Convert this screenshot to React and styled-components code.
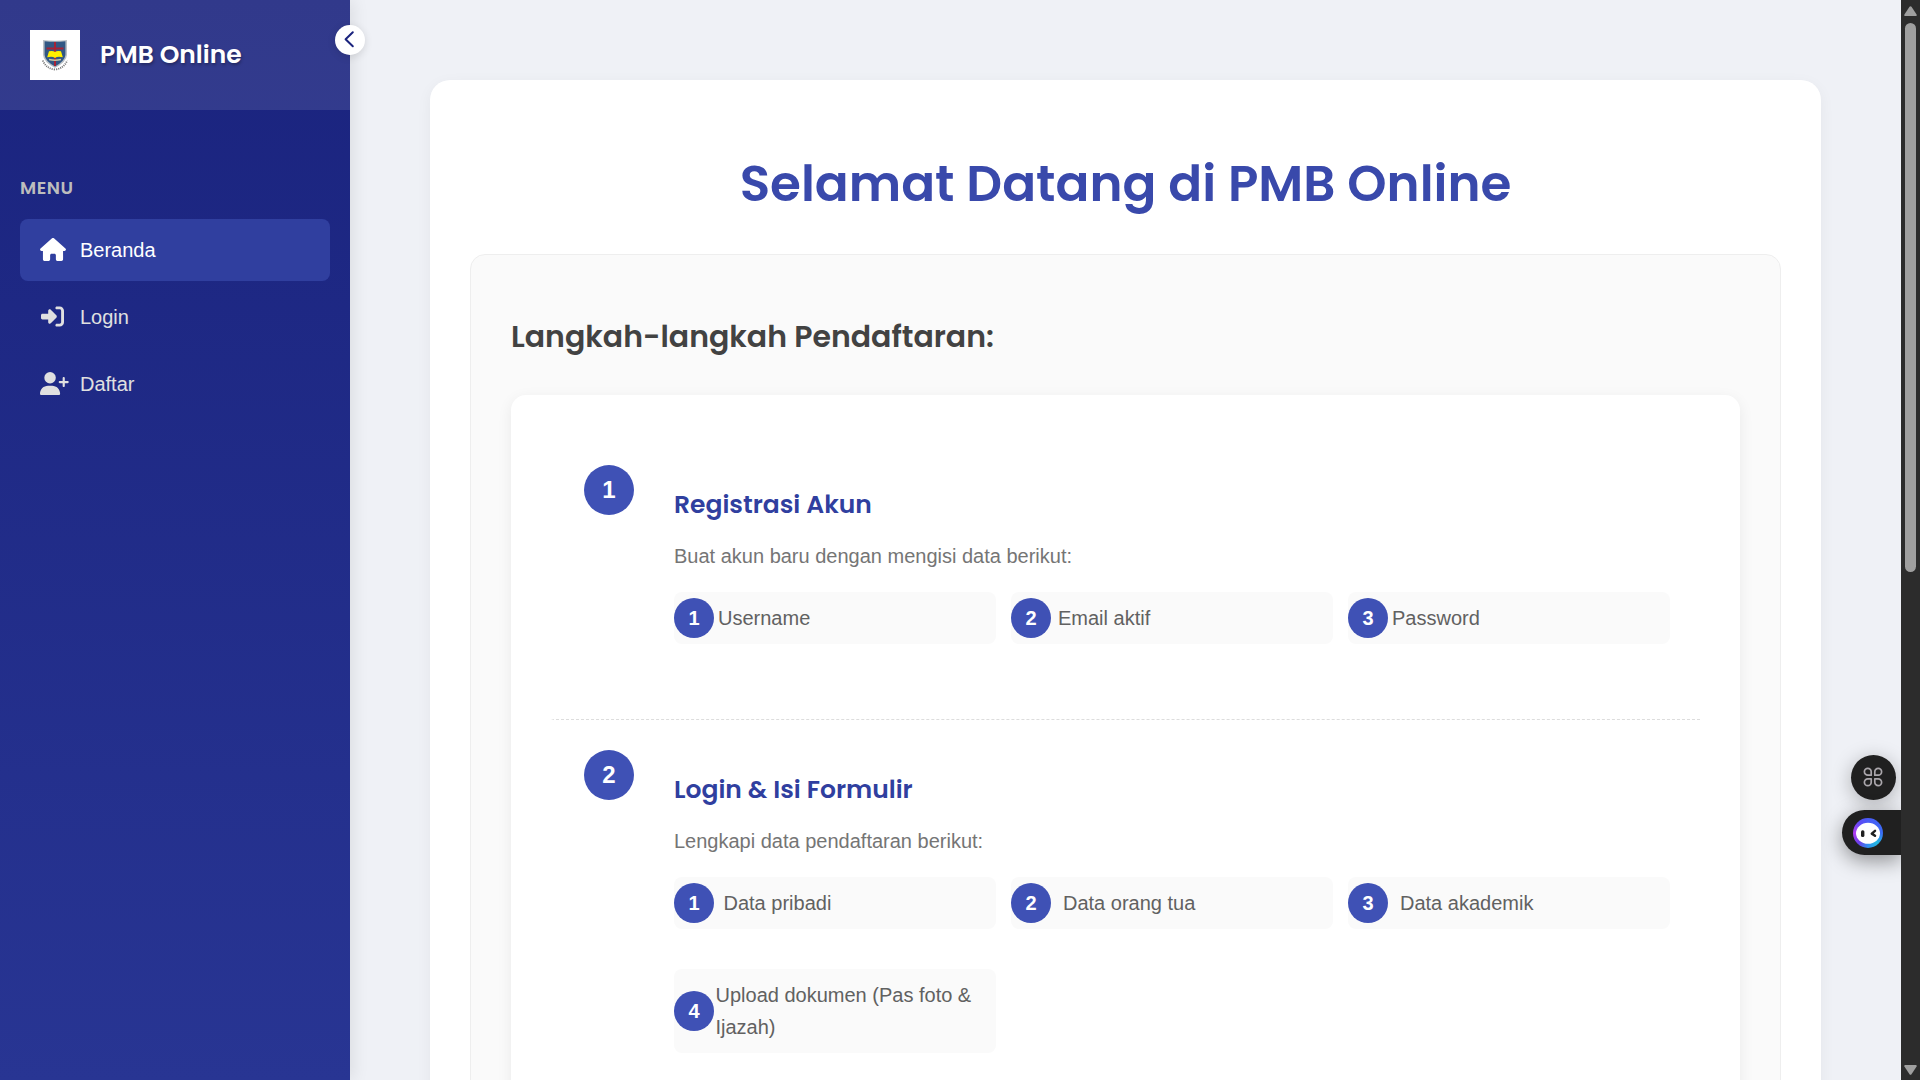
import React from "react";
import styled, { createGlobalStyle } from "styled-components";
import { FaHouse, FaRightToBracket, FaUserPlus } from "react-icons/fa6";

const heading = `"Poppins", "Inter", sans-serif`;

const GlobalStyle = createGlobalStyle`
  *, *::before, *::after { box-sizing: border-box; }
  html, body { margin: 0; height: 1080px; overflow: hidden; }
  body { background: #eff1f6; font-family: "Liberation Sans", Arial, sans-serif; font-size: 20px; line-height: 32px; }
  h1, h2, h3, p, ul, ol { margin: 0; padding: 0; }
  li { list-style: none; }
`;

const Page = styled.div`
  position: relative;
  display: flex;
  width: 1920px;
  height: 1080px;
  overflow: hidden;
`;

const Sidebar = styled.aside`
  position: relative;
  z-index: 2;
  flex: 0 0 350px;
  height: 1080px;
  background: linear-gradient(180deg, #1a237e 0%, #283593 100%);
  box-shadow: 4px 0 15px rgba(0, 0, 0, 0.08);
`;

const Brand = styled.div`
  display: flex;
  align-items: center;
  gap: 20px;
  height: 110px;
  padding: 0 30px;
  background: rgba(255, 255, 255, 0.1);
`;

const Logo = styled.svg`
  display: block;
  width: 50px;
  height: 50px;
  background: #fff;
`;

const BrandName = styled.span`
  font: 600 25px/36px ${heading};
  color: #fff;
  white-space: nowrap;
  text-shadow: 1px 2px 3px rgba(0, 0, 0, 0.3);
`;

const Toggle = styled.button`
  position: absolute;
  top: 25px;
  right: -15px;
  display: flex;
  align-items: center;
  justify-content: center;
  width: 30px;
  height: 30px;
  padding: 0;
  border: 0;
  border-radius: 50%;
  background: #fff;
  box-shadow: 0 2px 8px rgba(0, 0, 0, 0.12);
`;

const Menu = styled.nav`
  padding: 64px 20px 0;
`;

const MenuLabel = styled.div`
  height: 45px;
  font: 600 18px/28px ${heading};
  letter-spacing: 0.5px;
  color: #bdbdbd;
`;

const MenuItem = styled.a`
  display: flex;
  align-items: center;
  height: 62px;
  margin-bottom: 5px;
  padding: 0 20px 1px;
  border-radius: 8px;
  background: ${(p) => (p.$active ? "#303f9f" : "transparent")};
  color: ${(p) => (p.$active ? "#fff" : "#e0e0e0")};
`;

const MenuIcon = styled.span`
  display: flex;
  justify-content: ${(p) => (p.$centered ? "center" : "flex-start")};
  width: 25px;
  margin-right: 15px;
  font-size: 23px;

  svg {
    flex: none;
    width: ${(p) => p.$width}px;
    height: 23px;
  }
`;

const Main = styled.main`
  flex: 1;
  height: 1080px;
  padding: 80px 80px 0;
`;

const Card = styled.section`
  width: 1391px;
  height: 1100px;
  padding: 69px 40px 0;
  border-radius: 20px;
  background: #fff;
  box-shadow: 0 4px 15px rgba(0, 0, 0, 0.05);
`;

const Title = styled.h1`
  height: 105px;
  font: 600 50px/70px ${heading};
  text-align: center;
  white-space: nowrap;
  color: #3949ab;
`;

const Guide = styled.section`
  height: 1000px;
  padding: 60px 40px 0;
  border: 1px solid #eee;
  border-radius: 15px;
  background: #fafafa;
`;

const GuideTitle = styled.h2`
  height: 80px;
  font: 600 30px/44px ${heading};
  color: #424242;
`;

const Steps = styled.ol`
  height: 900px;
  padding: 40px;
  border-radius: 15px;
  background: #fff;
  box-shadow: 0 4px 15px rgba(0, 0, 0, 0.07);
`;

const Step = styled.li`
  display: flex;
  align-items: flex-start;
  gap: 40px;
  height: ${(p) => p.$height}px;
  padding: 30px 30px 0;
  border-left: 3px solid transparent;
  border-bottom: 1px dashed #ddd;
`;

const Badge = styled.span`
  display: flex;
  flex: none;
  align-items: center;
  justify-content: center;
  width: ${(p) => p.$size}px;
  height: ${(p) => p.$size}px;
  border-radius: 50%;
  background: #3f51b5;
  color: #fff;
  font-weight: 700;
  font-size: ${(p) => (p.$size > 45 ? 24 : 20)}px;
`;

const StepBody = styled.div`
  flex: 1;
  padding-top: 21px;
`;

const StepTitle = styled.h3`
  font: 600 25px/38px ${heading};
  color: #303f9f;
`;

const StepText = styled.p`
  margin: 16px 0 20px;
  color: #757575;
`;

const Fields = styled.ul`
  display: grid;
  grid-template-columns: repeat(3, 1fr);
  align-items: start;
  column-gap: 15px;
  row-gap: 40px;
`;

const Field = styled.li`
  display: flex;
  align-items: center;
  min-height: 52px;
  padding: 10px 0;
  border-radius: 8px;
  background: #fafafa;
  color: #616161;

  ${Badge} {
    margin: -4px 0;
  }
`;

const FieldText = styled.span`
  padding-left: ${(p) => p.$indent}px;
`;

const Scrollbar = styled.div`
  display: flex;
  flex: 0 0 19px;
  flex-direction: column;
  align-items: center;
  justify-content: space-between;
  height: 1080px;
  padding: 6px 0 5px;
  background: #2c2c2c;
  z-index: 4;
`;

const Thumb = styled.div`
  width: 11px;
  height: 549px;
  margin: 7px 0 auto;
  border-radius: 6px;
  background: #9f9f9f;
`;

const Arrow = styled.svg`
  display: block;
  width: 13px;
  height: 10px;
  fill: #9f9f9f;
`;

const Floating = styled.div`
  position: absolute;
  top: 755px;
  right: 19px;
  z-index: 3;
  display: flex;
  flex-direction: column;
  align-items: flex-end;
  gap: 10px;
`;

const AppsButton = styled.div`
  display: flex;
  align-items: center;
  justify-content: center;
  width: 45px;
  height: 45px;
  margin-right: 5px;
  padding: 0 1px 1px 0;
  border-radius: 50%;
  background: #202020;
  box-shadow: 0 4px 20px rgba(0, 0, 0, 0.28);
`;

const AssistantTab = styled.div`
  display: flex;
  align-items: center;
  width: 59px;
  height: 45px;
  padding-left: 11px;
  border-radius: 23px 0 0 23px;
  background: #202020;
  box-shadow: 0 6px 20px rgba(0, 0, 0, 0.4);
`;

const AssistantFace = styled.div`
  display: flex;
  align-items: center;
  justify-content: center;
  width: 30px;
  height: 30px;
  border-radius: 50%;
  background: conic-gradient(#4a5cf5, #3a6cf5 25%, #22b8e0 38%, #2f8ff0 50%, #6a3de8 62%, #b03df0 75%, #5a4cf5 90%, #4a5cf5);
`;

const steps = [
  {
    title: "Registrasi Akun",
    text: "Buat akun baru dengan mengisi data berikut:",
    height: 285,
    fields: [["Username", 4], ["Email aktif", 7], ["Password", 4]],
  },
  {
    title: "Login & Isi Formulir",
    text: "Lengkapi data pendaftaran berikut:",
    height: 410,
    fields: [["Data pribadi", 9.5], ["Data orang tua", 12], ["Data akademik", 12], ["Upload dokumen (Pas foto & Ijazah)", 1.5]],
  },
];

const Crest = () => (
  <Logo viewBox="0 0 50 50">
    <path d="M13 10Q25 11.500 37 10V25Q36.500 32 25 38Q13.500 32 13 25Z" fill="#b9c0c5" />
    <path d="M14.600 11.200Q25 12.500 35.400 11.200V25Q34.800 31 25 36.500Q15.200 31 14.600 25Z" fill="#315784" />
    <path d="M24 12h2v24h-2zM16.500 17.500h17v2h-17z" fill="#a72235" />
    <path d="M19 21.300Q23 20.300 25 22Q27 20.300 31 21.300L32.800 27.300Q27.500 26 25 28Q22.500 26 17.200 27.300Z" fill="#fff000" />
    <path d="M19 29.500Q25 31 31 29.500" fill="none" stroke="#c9c6a5" strokeWidth="1.300" />
    <path d="M13 31Q16 38.500 25 39.500Q34 38.500 37 31" fill="none" stroke="#fff" strokeWidth="3" />
    <path d="M12.800 30.500Q16 38.500 25 39.500Q34 38.500 37.200 30.500" fill="none" stroke="#777" strokeWidth="1.800" strokeDasharray="1.100 1" />
  </Logo>
);

export default function App() {
  return (
    <>
      <GlobalStyle />
      <Page>
        <Sidebar>
          <Brand>
            <Crest />
            <BrandName>PMB Online</BrandName>
          </Brand>
          <Toggle aria-label="Toggle">
            <svg width="30" height="30" viewBox="0 0 30 30" fill="none" stroke="#1a237e" strokeWidth="2" strokeLinecap="round" strokeLinejoin="round">
              <path d="M17.800 7.300 10.600 14.300 17.800 21.300" />
            </svg>
          </Toggle>
          <Menu>
            <MenuLabel>MENU</MenuLabel>
            <MenuItem $active>
              <MenuIcon $width={26}><FaHouse /></MenuIcon>
              Beranda
            </MenuItem>
            <MenuItem>
              <MenuIcon $width={23} $centered><FaRightToBracket /></MenuIcon>
              Login
            </MenuItem>
            <MenuItem>
              <MenuIcon $width={28.75}><FaUserPlus /></MenuIcon>
              Daftar
            </MenuItem>
          </Menu>
        </Sidebar>
        <Main>
          <Card>
            <Title>Selamat Datang di PMB Online</Title>
            <Guide>
              <GuideTitle>Langkah-langkah Pendaftaran:</GuideTitle>
              <Steps>
                {steps.map((step, i) => (
                  <Step key={step.title} $height={step.height}>
                    <Badge $size={50}>{i + 1}</Badge>
                    <StepBody>
                      <StepTitle>{step.title}</StepTitle>
                      <StepText>{step.text}</StepText>
                      <Fields>
                        {step.fields.map(([label, indent], n) => (
                          <Field key={label}>
                            <Badge $size={40}>{n + 1}</Badge>
                            <FieldText $indent={indent}>{label}</FieldText>
                          </Field>
                        ))}
                      </Fields>
                    </StepBody>
                  </Step>
                ))}
              </Steps>
            </Guide>
          </Card>
        </Main>
        <Scrollbar>
          <Arrow viewBox="0 0 13 10"><path d="M5.500.8Q6.500-.5 7.500.8L12.600 8.500Q13 10 11.800 10H1.200Q0 10 .4 8.500Z" /></Arrow>
          <Thumb />
          <Arrow viewBox="0 0 13 10"><path d="M5.500 9.200Q6.500 10.500 7.500 9.200L12.600 1.500Q13 0 11.800 0H1.200Q0 0 .4 1.500Z" /></Arrow>
        </Scrollbar>
        <Floating>
          <AppsButton>
            <svg width="20" height="20" viewBox="0 0 20 20" fill="none" stroke="#aaa6ab" strokeWidth="1.700" strokeLinejoin="round">
              <path d="M8.200 8.200H4.800A3.400 3.400 0 1 1 8.200 4.800Z" />
              <path d="M11.800 8.200V4.800A3.400 3.400 0 1 1 15.200 8.200Z" />
              <path d="M8.200 11.800V15.200A3.400 3.400 0 1 1 4.800 11.800Z" />
              <path d="M11.800 11.800H15.200A3.400 3.400 0 1 1 11.800 15.200Z" />
            </svg>
          </AppsButton>
          <AssistantTab>
            <AssistantFace>
              <svg width="30" height="30" viewBox="0 0 30 30">
                <ellipse cx="15" cy="15.300" rx="12" ry="10.500" fill="#fff" />
                <rect x="8" y="12.200" width="3.400" height="6.800" rx="1.500" fill="#202020" />
                <path d="M22 12.900 18.800 15.600 22 17.800" fill="none" stroke="#202020" strokeWidth="2.500" strokeLinecap="round" strokeLinejoin="round" />
              </svg>
            </AssistantFace>
          </AssistantTab>
        </Floating>
      </Page>
    </>
  );
}
